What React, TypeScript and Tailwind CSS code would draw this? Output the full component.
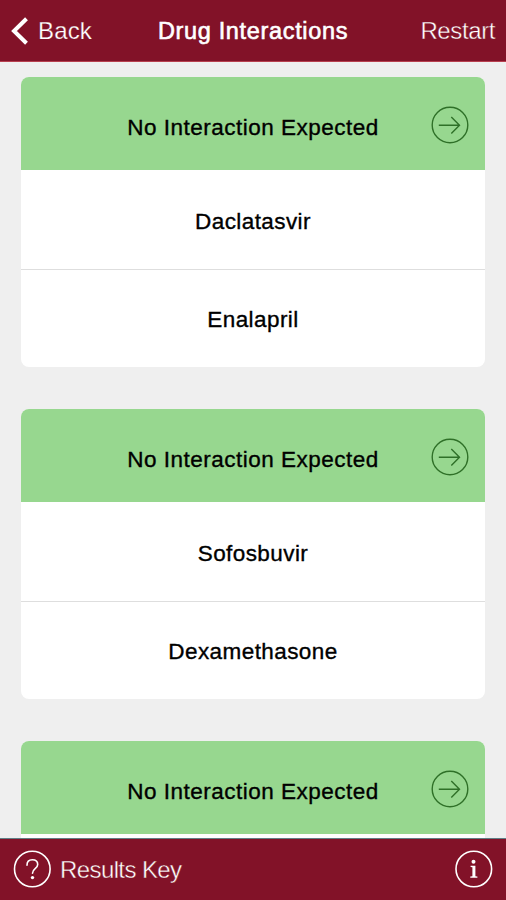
import { useState } from 'react'

interface Interaction {
  id: number
  result: string
  drugs: string[]
}

const interactions: Interaction[] = [
  { id: 1, result: 'No Interaction Expected', drugs: ['Daclatasvir', 'Enalapril'] },
  { id: 2, result: 'No Interaction Expected', drugs: ['Sofosbuvir', 'Dexamethasone'] },
  { id: 3, result: 'No Interaction Expected', drugs: [] },
]

function ArrowIcon() {
  return (
    <svg width="38" height="38" viewBox="0 0 38 38" fill="none" stroke="#2f7028" strokeWidth="1.4">
      <circle cx="19" cy="19" r="17.8" />
      <path d="M7.8 19.2H28.3M20.3 11L28.5 19.2L20.3 27.4" />
    </svg>
  )
}

function InteractionCard({ item }: { item: Interaction }) {
  return (
    <section className="min-h-[290px] shrink-0 overflow-hidden rounded-lg bg-white">
      <div className="grid h-[93px] grid-cols-[54px_1fr_54px] items-center bg-[#97d78f]">
        <h2 className="col-start-2 pt-[8px] text-center text-[22.5px] leading-7 tracking-[0.49px] whitespace-nowrap [-webkit-text-stroke:0.35px_black]">
          {item.result}
        </h2>
        <button type="button" className="pt-[3px]">
          <ArrowIcon />
        </button>
      </div>
      {item.drugs.map((drug, i) => (
        <div
          key={drug}
          className={
            i === 0
              ? 'flex h-[100px] items-center justify-center border-b border-[#dedede] pt-1'
              : 'flex h-[97px] items-center justify-center pt-[3px]'
          }
        >
          <span className="text-[22.5px] leading-7 tracking-[0.42px] [-webkit-text-stroke:0.35px_black]">{drug}</span>
        </div>
      ))}
    </section>
  )
}

export default function App() {
  const [items] = useState(interactions)

  return (
    <div className="flex h-[900px] w-[506px] flex-col overflow-hidden bg-[#efefef] font-['Liberation_Sans',Arial,sans-serif] text-black">
      <header className="grid h-[62px] shrink-0 grid-cols-[1fr_auto_1fr] items-center border-b border-[#b8404f] bg-[#821228] px-[11px] text-white">
        <button type="button" className="flex items-center gap-[9px]">
          <svg width="18" height="28" viewBox="0 0 18 28" fill="none" stroke="white" strokeWidth="4">
            <path d="M15.5 1.7L3 14L15.5 26.3" />
          </svg>
          <span className="pt-px text-[24px] leading-7 tracking-[0.15px] [-webkit-text-stroke:0.25px_#821228]">Back</span>
        </button>
        <h1 className="pt-px text-[23.5px] leading-7 tracking-[0.66px] [-webkit-text-stroke:0.6px_white]">Drug Interactions</h1>
        <button type="button" className="pt-px text-right text-[24px] leading-7 tracking-[-0.4px] [-webkit-text-stroke:0.4px_#821228]">
          Restart
        </button>
      </header>

      <main className="flex min-h-0 flex-1 flex-col gap-[42px] overflow-hidden px-[21px] pt-[15px]">
        {items.map((item) => (
          <InteractionCard key={item.id} item={item} />
        ))}
      </main>

      <footer className="flex h-[62px] shrink-0 items-center justify-between border-t border-[#5f7f86] bg-[#821228] px-[13px] text-white">
        <button type="button" className="flex items-center gap-[9px]">
          <svg width="38" height="38" viewBox="0 0 38 38" fill="none" stroke="white" strokeLinecap="round" className="-mt-px">
            <circle cx="19.3" cy="19" r="17.8" strokeWidth="1.6" />
            <path d="M14 15.2C14 11.8 16.2 9.8 19.3 9.8C22.5 9.8 24.7 11.7 24.7 14.5C24.7 18.8 19.5 18.7 19.5 23.2" strokeWidth="1.6" />
            <circle cx="19.5" cy="27.6" r="1.7" fill="white" stroke="none" />
          </svg>
          <span className="text-[24px] leading-7 tracking-[-0.6px] [-webkit-text-stroke:0.4px_#821228]">Results Key</span>
        </button>
        <button type="button">
          <svg width="38" height="38" viewBox="0 0 38 38" fill="white" className="-mt-px">
            <circle cx="18.8" cy="19" r="17.8" fill="none" stroke="white" strokeWidth="1.6" />
            <circle cx="18.5" cy="11.7" r="2" />
            <path d="M15.6 15.8H20.4V26.2L22.4 26.6V27.8H15.3V26.6L17.4 26.2V17.2L15.6 16.9Z" />
          </svg>
        </button>
      </footer>
    </div>
  )
}
